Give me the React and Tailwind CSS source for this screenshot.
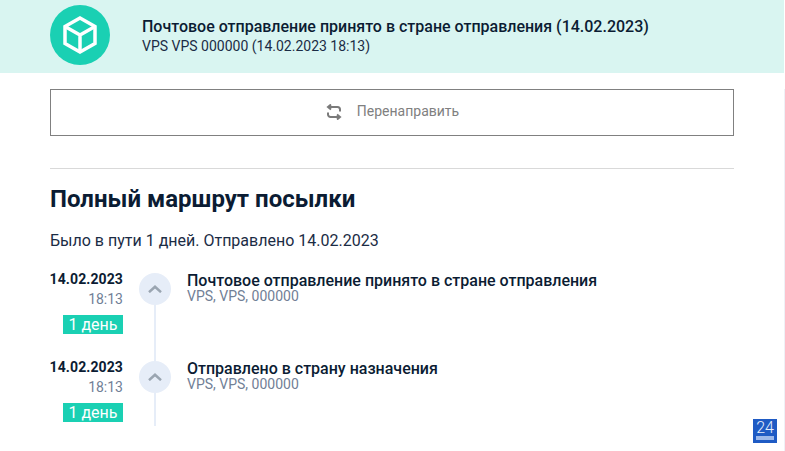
const events = [
  { title: 'Почтовое отправление принято в стране отправления' },
  { title: 'Отправлено в страну назначения' },
];

function TimelineRow({ title }) {
  return (
    <div className="flex h-[88px] last:h-[65px]">
      <div className="flex w-[73px] flex-col items-end">
        <div className="h-[16px] text-[14px] leading-[13px] font-bold tracking-[0.1px] text-[#0b1c33]">14.02.2023</div>
        <div className="h-[26px] text-[14px] leading-[20px] text-[#718096]">18:13</div>
        <div className="h-[19px] w-[60px] bg-[#1ad0b3] text-center text-[16px] leading-[19px] text-white">1 день</div>
      </div>
      <div className="ml-[16px] flex w-[32px] flex-col items-center">
        <div className="flex size-[32px] shrink-0 items-center justify-center rounded-full bg-[#e6edf8]">
          <svg width="14" height="8" viewBox="0 0 14 8" fill="none" stroke="#9aa5b1" strokeWidth="2.500">
            <path d="M1 7.200L7 1.800l6 5.400" />
          </svg>
        </div>
        <div className="w-[2px] flex-1 bg-[#e6edf8]" />
      </div>
      <div className="ml-[16px]">
        <div className="text-[16px] leading-[15px] font-medium text-[#0b1c33]">{title}</div>
        <div className="text-[14px] leading-[16px] text-[#718096]">VPS, VPS, 000000</div>
      </div>
    </div>
  );
}

export default function App() {
  return (
    <div className="relative h-[451px] overflow-hidden bg-white font-['Roboto',sans-serif]">
      <header className="mr-[1px] flex h-[73px] items-start bg-[#d9f5f1] pl-[50px] pt-[5px]">
        <div className="flex size-[60px] items-center justify-center rounded-full bg-[#1ad0b3]">
          <svg width="34" height="38" viewBox="0 0 34 38" fill="none" stroke="white" strokeWidth="3.500">
            <path d="M17 2L32 10.500V27.500L17 36L2 27.500V10.500Z" />
            <path d="M2 10.500L17 19L32 10.500M17 19V36" />
          </svg>
        </div>
        <div className="ml-[32px] pt-[12px]">
          <div className="text-[16px] leading-[20px] font-medium text-[#0b1c33]">
            Почтовое отправление принято в стране отправления (14.02.2023)
          </div>
          <div className="text-[14px] leading-[18px] text-[#1b2c45]">VPS VPS 000000 (14.02.2023 18:13)</div>
        </div>
      </header>

      <main className="h-[378px] border-r border-[#eff1f6] pl-[50px] pr-[50px]">
        <button className="mt-[16px] flex h-[47px] w-full items-center justify-center border border-[#808080] pb-[1px] pl-[1px] text-[14px] text-[#808080]">
          <svg width="16" height="16" viewBox="0 0 16 16" fill="none" stroke="#7a7a7a" strokeWidth="2" className="mr-[15px]">
            <path d="M5 0.500L2 3 5 5.500" />
            <path d="M2 3h9.500a2.500 2.500 0 0 1 2.500 2.500V7.500" />
            <path d="M11 10.500L14 13 11 15.500" />
            <path d="M14 13H4.500A2.500 2.500 0 0 1 2 10.500V8.500" />
          </svg>
          <span className="mb-[2px]">Перенаправить</span>
        </button>

        <div className="mt-[32px] h-px bg-[#d9d9d9]" />

        <h2 className="mt-[15px] text-[24px] leading-[30px] font-bold text-[#0b1c33]">Полный маршрут посылки</h2>
        <p className="mt-[15px] text-[16px] leading-[24px] text-[#1b2c45]">Было в пути 1 дней. Отправлено 14.02.2023</p>

        <div className="mt-[20px]">
          {events.map((event) => (
            <TimelineRow key={event.title} title={event.title} />
          ))}
        </div>
      </main>

      <div className="absolute left-[753px] top-[419px] flex h-[24px] w-[24px] flex-col items-center bg-[#1f5bc4] text-[16px] leading-[17px] font-light text-[#e6eefc]">
        24
        <div className="h-[4px] w-[18px] bg-[#9db9ea]" />
      </div>
    </div>
  );
}
